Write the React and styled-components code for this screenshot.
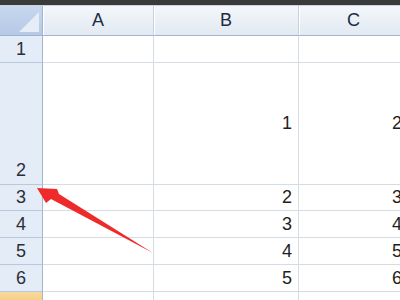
import React from 'react'
import styled, { createGlobalStyle } from 'styled-components'

const GlobalStyle = createGlobalStyle`
  html, body {
    margin: 0;
    padding: 0;
    background: #ffffff;
  }
  body {
    font-family: "Liberation Sans", Arial, sans-serif;
  }
`

const Screen = styled.div`
  position: relative;
  width: 400px;
  height: 300px;
  overflow: hidden;
  background: #ffffff;
`

const TopBar = styled.div`
  height: 5px;
  background: #3a3a3a;
  border-bottom: 1px solid #c9d3df;
`

const Sheet = styled.div`
  display: grid;
  grid-template-columns: 43px 111px 145px 110px;
  grid-template-rows: 30px 27px 122px 26px 27px 27px 27px 20px;
`

const Corner = styled.div`
  position: relative;
  box-sizing: border-box;
  background: linear-gradient(#c7d7ee, #b5c9e6);
  border-right: 1px solid #9eb6ce;
  border-bottom: 1px solid #9eb6ce;

  &::after {
    content: "";
    position: absolute;
    right: 3px;
    bottom: 3px;
    border-style: solid;
    border-width: 0 0 20px 20px;
    border-color: transparent transparent #e6edf7 transparent;
  }
`

const ColHead = styled.div`
  box-sizing: border-box;
  display: flex;
  align-items: center;
  justify-content: center;
  background: linear-gradient(#f4f7fb, #e2e9f2);
  border-right: 1px solid #c5d1de;
  border-bottom: 1px solid #9eb6ce;
  box-shadow: inset 1px 0 0 #ffffff;
  color: #1b2d44;
  font-size: 18px;
`

const RowHead = styled.div`
  box-sizing: border-box;
  display: flex;
  align-items: ${p => (p.$bottom ? 'flex-end' : 'center')};
  justify-content: center;
  padding-bottom: ${p => (p.$bottom ? '3px' : '0')};
  background: ${p =>
    p.$active ? 'linear-gradient(#f9d99f, #f2c265)' : '#e4ecf7'};
  border-right: 1px solid #9eb6ce;
  border-bottom: 1px solid #b7c8dc;
  color: #2a2f36;
  font-size: 18px;
`

const Cell = styled.div`
  box-sizing: border-box;
  display: flex;
  align-items: center;
  justify-content: flex-end;
  padding-right: 6px;
  border-right: 1px solid #d6dce4;
  border-bottom: 1px solid #d6dce4;
  color: #1e1e1e;
  font-size: 18px;
`

const Arrow = styled.svg`
  position: absolute;
  left: 0;
  top: 0;
  pointer-events: none;
`

const columns = ['A', 'B', 'C']

const rows = [
  { n: 1, values: ['', '', ''] },
  { n: 2, values: ['', '1', '2'], bottom: true },
  { n: 3, values: ['', '2', '3'] },
  { n: 4, values: ['', '3', '4'] },
  { n: 5, values: ['', '4', '5'] },
  { n: 6, values: ['', '5', '6'] },
  { n: 7, values: ['', '', ''], active: true, hidden: true },
]

const App = () => {
  return (
    <Screen>
      <GlobalStyle />
      <TopBar />
      <Sheet>
        <Corner />
        {columns.map(c => (
          <ColHead key={c}>{c}</ColHead>
        ))}
        {rows.map(r => (
          <React.Fragment key={r.n}>
            <RowHead $bottom={r.bottom} $active={r.active}>
              {r.hidden ? '' : r.n}
            </RowHead>
            {r.values.map((v, i) => (
              <Cell key={i}>{v}</Cell>
            ))}
          </React.Fragment>
        ))}
      </Sheet>
      <Arrow width="400" height="300" viewBox="0 0 400 300">
        <polygon
          points="37,188 57,189 59,194 153,253 51,199 46,203"
          fill="#ef2a2a"
        />
      </Arrow>
    </Screen>
  )
}

export default App
